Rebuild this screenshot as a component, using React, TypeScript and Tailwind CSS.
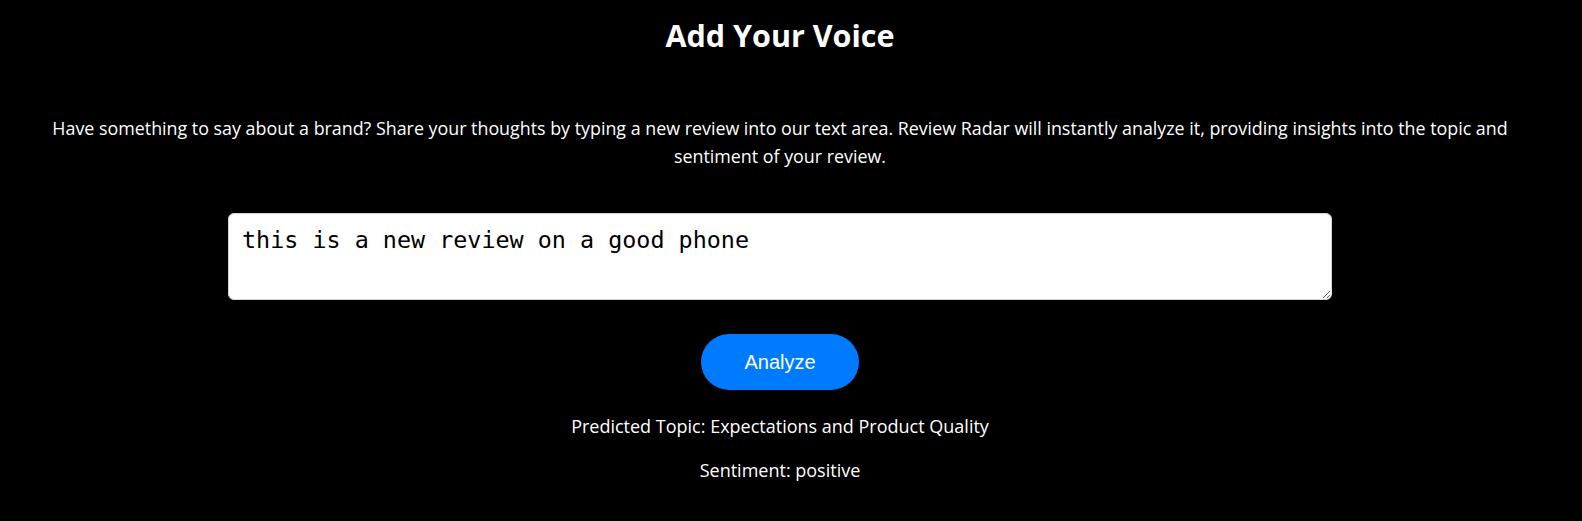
import { useState } from "react";

export default function App() {
  const [review, setReview] = useState("this is a new review on a good phone");

  return (
    <div className="min-h-screen bg-black text-white font-['Open_Sans',sans-serif]">
      <div className="flex flex-col items-center pr-[22px] text-center">
        <h2 className="mt-[16px] text-[30.5px] leading-[38px] font-bold">Add Your Voice</h2>

        <p className="mt-[60px] px-[30px] text-[17.85px] leading-[28px]">
          Have something to say about a brand? Share your thoughts by typing a new review into our text area. Review
          Radar will instantly analyze it, providing insights into the topic and
          <br />
          sentiment of your review.
        </p>

        <textarea
          value={review}
          onChange={e => setReview(e.target.value)}
          className="mt-[43px] h-[87px] w-[1104px] rounded-md border border-gray-300 bg-white px-[13px] py-[12px] text-left font-['DejaVu_Sans_Mono',monospace] text-[23.4px] leading-[28px] text-black outline-none"
        />

        <button className="mt-[34px] h-[56px] w-[158px] rounded-full bg-[#007bff] font-['Liberation_Sans',Arial,sans-serif] text-[20px] text-white">
          Analyze
        </button>

        <p className="mt-[23px] text-[18px] leading-[26px]">Predicted Topic: Expectations and Product Quality</p>
        <p className="mt-[18px] text-[18px] leading-[26px]">Sentiment: positive</p>
      </div>
    </div>
  );
}
